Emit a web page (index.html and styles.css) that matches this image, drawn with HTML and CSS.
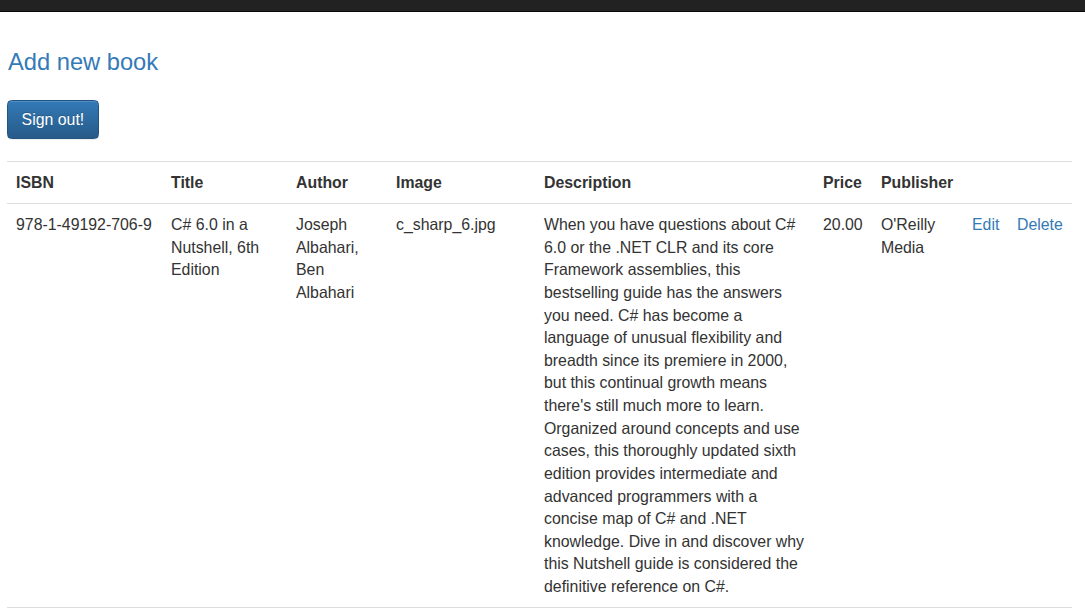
FILE: index.html
```html
<!DOCTYPE html>
<html lang="en">
<head>
<meta charset="utf-8">
<title>Books</title>
<link rel="stylesheet" href="styles.css">
</head>
<body>
<div class="navbar"></div>
<div class="container">
  <h2 class="page-link"><a href="#">Add new book</a></h2>
  <div class="actions-bar">
    <button class="btn-primary" type="button">Sign out!</button>
  </div>
  <table class="table">
    <colgroup>
      <col class="c-isbn">
      <col class="c-title">
      <col class="c-author">
      <col class="c-image">
      <col class="c-desc">
      <col class="c-price">
      <col class="c-pub">
      <col class="c-edit">
      <col class="c-del">
    </colgroup>
    <tbody>
      <tr>
        <th>ISBN</th>
        <th>Title</th>
        <th>Author</th>
        <th>Image</th>
        <th>Description</th>
        <th>Price</th>
        <th>Publisher</th>
        <th></th>
        <th></th>
      </tr>
      <tr class="last-row">
        <td>978-1-49192-706-9</td>
        <td>C# 6.0 in a Nutshell, 6th Edition</td>
        <td>Joseph Albahari, Ben Albahari</td>
        <td>c_sharp_6.jpg</td>
        <td>When you have questions about C# 6.0 or the .NET CLR and its core Framework assemblies, this bestselling guide has the answers you need. C# has become a language of unusual flexibility and breadth since its premiere in 2000, but this continual growth means there's still much more to learn. Organized around concepts and use cases, this thoroughly updated sixth edition provides intermediate and advanced programmers with a concise map of C# and .NET knowledge. Dive in and discover why this Nutshell guide is considered the definitive reference on C#.</td>
        <td>20.00</td>
        <td>O'Reilly Media</td>
        <td><a href="#">Edit</a></td>
        <td><a href="#">Delete</a></td>
      </tr>
    </tbody>
  </table>
</div>
</body>
</html>
```

FILE: styles.css
```css
html, body {
  margin: 0;
  padding: 0;
  background: #fff;
}

body {
  font-family: "Liberation Sans", Arial, Helvetica, sans-serif;
  font-size: 15.87px;
  line-height: 22.67px;
  color: #333;
  overflow: hidden;
}

a {
  color: #337ab7;
  text-decoration: none;
}

.navbar {
  height: 11px;
  background: #222;
  border-bottom: 1px solid #080808;
}

.container {
  padding-left: 7px;
  width: 1065px;
}

.page-link {
  margin: 37px 0 0 1px;
  font-size: 23.7px;
  line-height: 26.4px;
  font-weight: normal;
}

.actions-bar {
  margin-top: 24.7px;
}

.btn-primary {
  display: inline-block;
  box-sizing: border-box;
  height: 39px;
  padding: 0 13.6px;
  font-family: inherit;
  font-size: 15.87px;
  line-height: 37px;
  color: #fff;
  text-shadow: 0 -1px 0 rgba(0, 0, 0, 0.2);
  background-image: linear-gradient(to bottom, #337ab7 0, #265a88 100%);
  border: 1px solid #245580;
  border-radius: 4.5px;
  box-shadow: inset 0 1px 0 rgba(255, 255, 255, 0.15), 0 1px 1px rgba(0, 0, 0, 0.075);
  cursor: pointer;
}

.table {
  margin-top: 22px;
  width: 1065px;
  table-layout: fixed;
  border-collapse: collapse;
  border-spacing: 0;
}

.table th,
.table td {
  padding: 9.6px 9px 8.4px;
  border-top: 1px solid #ddd;
  vertical-align: top;
  text-align: left;
  line-height: 22.62px;
}

.table td {
  padding-top: 10.4px;
}

.table .last-row td {
  border-bottom: 1px solid #ddd;
}

.table th {
  font-weight: bold;
}

.c-isbn { width: 155px; }
.c-title { width: 125px; }
.c-author { width: 100px; }
.c-image { width: 148px; }
.c-desc { width: 279px; }
.c-price { width: 58px; }
.c-pub { width: 91px; }
.c-edit { width: 45px; }
.c-del { width: 64px; }
```
